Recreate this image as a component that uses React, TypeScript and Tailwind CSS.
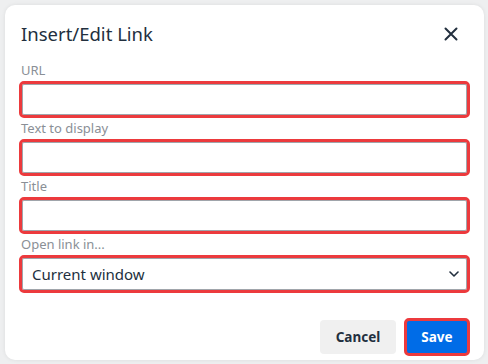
import React from 'react';

const font = { fontFamily: '"Segoe UI", "Noto Sans", sans-serif' };

const Field = ({ label, children }: { label: string; children?: React.ReactNode }) => (
  <div>
    <div className="ml-[2px] text-[13px] leading-[21px] text-[#8a8f96]">{label}</div>
    {children ?? (
      <div className="h-[37px] rounded-[5px] border-[3px] border-[#ec3a3d] bg-white shadow-[inset_0_0_0_1px_#a0a5ab]" />
    )}
  </div>
);

export default function App() {
  return (
    <div className="w-[488px] h-[364px] bg-[#eeeff0] p-[5px]" style={font}>
      <div className="h-[355px] w-[479px] rounded-[10px] bg-white shadow-[0_0_4px_rgba(0,0,0,0.08)] flex flex-col">
        <div className="flex items-center justify-between h-[55px] pl-[16px] pr-[26px] pt-[2px]">
          <h1 className="text-[18.5px] text-[#222f3e]">Insert/Edit Link</h1>
          <svg width="14" height="14" viewBox="0 0 14 14" className="text-[#222f3e]">
            <path d="M1.5 1.5 L12.5 12.5 M12.5 1.5 L1.5 12.5" stroke="currentColor" strokeWidth="2" strokeLinecap="round" />
          </svg>
        </div>
        <div className="px-[14px] flex flex-col">
          <Field label="URL" />
          <Field label="Text to display" />
          <Field label="Title" />
          <Field label="Open link in...">
            <div className="h-[38px] rounded-[5px] border-[3px] border-[#ec3a3d] bg-white shadow-[inset_0_0_0_1px_#a0a5ab] flex items-center justify-between pl-[10px] pr-[8px]">
              <span className="text-[15px] text-[#222f3e]">Current window</span>
              <svg width="10" height="6" viewBox="0 0 10 6">
                <path d="M1 1 L5 5 L9 1" fill="none" stroke="#222f3e" strokeWidth="1.6" strokeLinecap="round" strokeLinejoin="round" />
              </svg>
            </div>
          </Field>
        </div>
        <div className="mt-auto flex justify-end items-center gap-[8px] pr-[14px] pb-[4px]">
          <button className="h-[34px] w-[76px] rounded-[4px] bg-[#f0f0f0] text-[13.5px] font-bold text-[#222f3e]">Cancel</button>
          <button className="h-[38px] w-[66px] rounded-[5px] border-[3px] border-[#ec3a3d] bg-[#006ce7] text-[13.5px] font-bold text-white">Save</button>
        </div>
      </div>
    </div>
  );
}
